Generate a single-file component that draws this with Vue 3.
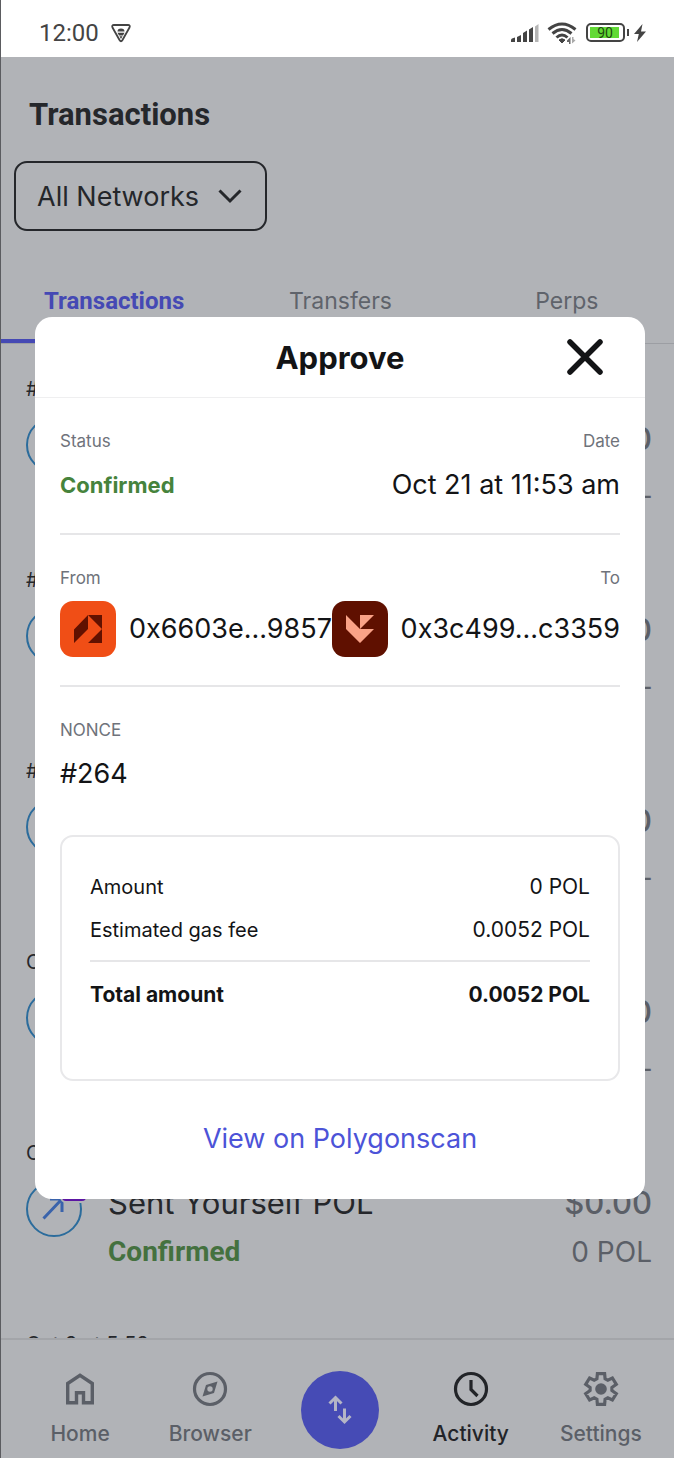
<script setup>
import { ref } from 'vue'

const network = ref('All Networks')
const open = ref(true)

const tabs = ['Transactions', 'Transfers', 'Perps']
const activeTab = ref('Transactions')

const activity = [
  { when: '#264 - Oct 21 at 11:53 am', title: 'Approve', value: '$0.00', amount: '0 POL' },
  { when: '#263 - Oct 21 at 11:52 am', title: 'Approve', value: '$0.00', amount: '0 POL' },
  { when: '#262 - Oct 21 at 11:50 am', title: 'Approve', value: '$0.00', amount: '0 POL' },
  { when: 'Oct 20 at 9:14 am', title: 'Received POL', value: '$0.00', amount: '0 POL' },
  { when: 'Oct 12 at 6:02 pm', title: 'Sent Yourself POL', value: '$0.00', amount: '0 POL' },
  { when: 'Oct 9 at 5:59 pm', title: 'Received POL', value: '$0.00', amount: '0 POL' }
]
</script>

<template>
  <div class="phone">
    <header class="status-bar">
      <span class="clock">12:00</span>
      <svg class="shield" width="20" height="20" viewBox="0 0 20 20" aria-hidden="true">
        <path d="M3 2H17Q19.500 2 18.500 4.500L11.500 17Q10 19.500 8.500 17L1.500 4.500Q.5 2 3 2Z" fill="none" stroke="#444" stroke-width="1.800" />
        <path d="M6.500 8.500Q6.500 5.500 10 5.500T13.500 8.500ZM6.500 9.800H13.500L12 12.500H8ZM8.500 13.300H11.500L10 16Z" fill="#444" />
      </svg>
      <svg class="signal" width="28" height="20" viewBox="0 0 28 20" aria-hidden="true">
        <path d="M0 19V17Q0 16 1 15.500L4 14.500V19ZM6 19V14L10 12V19ZM12 19V10L16 7.500V19ZM18 19V6.500L22 4V19Z" fill="#444" />
        <path d="M24 19V3.500L27.500 1V19Z" fill="#b5b5b5" />
      </svg>
      <svg class="wifi" width="30" height="24" viewBox="0 0 30 24" aria-hidden="true">
        <g fill="none" stroke="#444" stroke-width="3">
          <path d="M1.500 8.500Q15-2.500 28.500 8.500" />
          <path d="M5.500 12.500Q15 4.500 24.500 12.500" />
          <path d="M9.500 16.500Q15 11.500 20.500 16.500" />
        </g>
        <path d="M12 19Q15 16.500 18 19L15 22Z" fill="#444" stroke="#444" stroke-width="1" />
        <path d="M20 19.500L23.500 16V23H22V21H20Z" fill="#666" />
        <path d="M25 16H26.500V18L28.500 19.500L25 22.500Z" fill="#aaa" />
      </svg>
      <span class="battery"><span class="charge">90</span></span>
      <span class="battery-tip"></span>
      <svg class="bolt" width="12" height="18" viewBox="0 0 12 18" aria-hidden="true">
        <path d="M8.500 0L0 10H4.800L3 18L12 7.500H7Z" fill="#444" />
      </svg>
    </header>

    <main class="screen">
      <h1>Transactions</h1>
      <div class="network">
        <select v-model="network" aria-label="Network">
          <option>All Networks</option>
          <option>Polygon</option>
        </select>
        <svg width="24" height="16" viewBox="0 0 24 16" aria-hidden="true">
          <path d="M1.500 2.500L12 13L22.500 2.500" fill="none" stroke="#25272b" stroke-width="3" />
        </svg>
      </div>

      <nav class="tabs" aria-label="Activity type">
        <button
          v-for="tab in tabs"
          :key="tab"
          type="button"
          :class="{ active: tab === activeTab }"
          @click="activeTab = tab"
        >{{ tab }}</button>
      </nav>

      <ul class="list">
        <li v-for="item in activity" :key="item.when">
          <p class="when">{{ item.when }}</p>
          <div class="entry">
            <span class="token">
              <svg width="56" height="56" viewBox="0 0 56 56" aria-hidden="true">
                <circle cx="28" cy="28" r="27" fill="none" stroke="#2b6c9c" stroke-width="2" />
                <path d="M17.500 37.500L36 18M24 18H36V31" fill="none" stroke="#3a63ab" stroke-width="3" />
              </svg>
              <span class="badge"></span>
            </span>
            <div class="what">
              <p class="title">{{ item.title }}</p>
              <p class="state">Confirmed</p>
            </div>
            <div class="sum">
              <p class="title">{{ item.value }}</p>
              <p class="amount">{{ item.amount }}</p>
            </div>
          </div>
        </li>
      </ul>
    </main>

    <nav class="bottom" aria-label="Main">
      <a href="#home">
        <svg width="36" height="36" viewBox="0 0 36 36" aria-hidden="true">
          <path d="M5.700 31.700V12.500L18 4.300L30.300 12.500V31.700H21.500V21.700H14.500V31.700Z" fill="none" stroke="currentColor" stroke-width="3.400" />
        </svg>
        Home
      </a>
      <a href="#browser">
        <svg width="36" height="36" viewBox="0 0 36 36" aria-hidden="true">
          <circle cx="18" cy="18" r="15.500" fill="none" stroke="currentColor" stroke-width="3.200" />
          <path fill="currentColor" fill-rule="evenodd" d="M25.500 10.500L14 14L10.500 25.500L22 22ZM18 15.300A2.700 2.700 0 1 1 18 20.700A2.700 2.700 0 1 1 18 15.300Z" />
        </svg>
        Browser
      </a>
      <button type="button" class="swap" aria-label="Swap">
        <svg width="30" height="30" viewBox="0 0 30 30" aria-hidden="true">
          <path d="M10.500 16V2.500M4.500 8.500L10.500 2.500L16.500 8.500M19.500 13.500V27M13.500 21L19.500 27L25.500 21" fill="none" stroke="#b4b5c6" stroke-width="3" />
        </svg>
      </button>
      <a href="#activity" class="current" aria-current="page">
        <svg width="36" height="36" viewBox="0 0 36 36" aria-hidden="true">
          <circle cx="18" cy="18" r="15.500" fill="none" stroke="currentColor" stroke-width="3.200" />
          <path d="M18 9V18.500L24.500 25" fill="none" stroke="currentColor" stroke-width="3.200" />
        </svg>
        Activity
      </a>
      <a href="#settings">
        <svg width="36" height="36" viewBox="-18 -18 36 36" aria-hidden="true">
          <path d="M-4.100-10.200L-3.600-15.400H3.600L4.100-10.200L6.800-8.700L11.400-11L15.300-4.600L10.900-1.500V1.500L15.300 4.600L11.400 11L6.800 8.700L4.100 10.200L3.600 15.400H-3.600L-4.100 10.200L-6.800 8.700L-11.400 11L-15.300 4.600L-10.900 1.500V-1.500L-15.300-4.600L-11.400-11L-6.800-8.700Z" fill="none" stroke="currentColor" stroke-width="3.200" />
          <circle r="5.800" fill="currentColor" />
        </svg>
        Settings
      </a>
    </nav>

    <section v-if="open" class="dialog" role="dialog" aria-labelledby="dialog-title">
      <header class="dialog-head">
        <h2 id="dialog-title">Approve</h2>
        <button type="button" class="close" aria-label="Close" @click="open = false">
          <svg width="36" height="36" viewBox="0 0 36 36" aria-hidden="true">
            <path d="M3 3L33 33M33 3L3 33" fill="none" stroke="#131416" stroke-width="5.500" stroke-linecap="round" />
          </svg>
        </button>
      </header>

      <div class="dialog-body">
        <div class="pair">
          <div class="field">
            <h3>Status</h3>
            <p class="confirmed">Confirmed</p>
          </div>
          <div class="field end">
            <h3>Date</h3>
            <p>Oct 21 at 11:53 am</p>
          </div>
        </div>

        <div class="pair accounts">
          <div class="field from">
            <h3>From</h3>
            <p class="account">
              <svg width="56" height="56" viewBox="0 0 56 56" aria-hidden="true">
                <rect width="56" height="56" rx="13" fill="#f04e16" />
                <path d="M14 42V28.500L28 14V28ZM28 14H42V28ZM42 28V42H28Z" fill="#611100" />
              </svg>
              0x6603e...98577
            </p>
          </div>
          <div class="field end to">
            <h3>To</h3>
            <p class="account">
              <svg width="56" height="56" viewBox="0 0 56 56" aria-hidden="true">
                <rect width="56" height="56" rx="13" fill="#5f1000" />
                <path d="M14 14L28 28H42L28 42L14 28ZM28 14H42L28 28Z" fill="#faa287" />
              </svg>
              0x3c499...c3359
            </p>
          </div>
        </div>

        <div class="field nonce">
          <h3>NONCE</h3>
          <p>#264</p>
        </div>

        <dl class="fees">
          <div><dt>Amount</dt><dd>0 POL</dd></div>
          <div><dt>Estimated gas fee</dt><dd>0.0052 POL</dd></div>
          <div class="total"><dt>Total amount</dt><dd>0.0052 POL</dd></div>
        </dl>

        <a class="explorer" href="#polygonscan">View on Polygonscan</a>
      </div>
    </section>
  </div>
</template>

<style>
body {
  margin: 0;
}
</style>

<style scoped>
.phone {
  position: relative;
  display: flex;
  flex-direction: column;
  box-sizing: border-box;
  height: 100vh;
  overflow: hidden;
  border-left: 1px solid #5b5c60;
  background: #b1b3b7;
  color: #25272b;
  font-family: Inter, "Liberation Sans", sans-serif;
}

h1, h2, h3, p, ul, dl, dd {
  margin: 0;
  padding: 0;
  font-weight: 400;
}

button {
  padding: 0;
  border: 0;
  background: none;
  font: inherit;
  color: inherit;
}

svg {
  display: block;
  flex: none;
}

.status-bar {
  display: flex;
  flex: none;
  align-items: center;
  box-sizing: border-box;
  height: 57px;
  padding: 8px 28px 0 38px;
  background: #fff;
}

.clock {
  font: 24px/32px Roboto, sans-serif;
  color: #444;
}

.shield {
  margin-left: 12px;
}

.signal {
  margin-left: auto;
}

.wifi {
  margin-left: 8px;
}

.battery {
  box-sizing: border-box;
  width: 39px;
  height: 19px;
  margin-left: 9px;
  padding: 2px;
  border: 2px solid #444;
  border-radius: 5px;
}

.charge {
  display: block;
  width: 28px;
  height: 11px;
  padding-left: 1px;
  background: #62da35;
  color: #1f4a12;
  font: 14px/12px Roboto, sans-serif;
  text-align: center;
}

.battery-tip {
  width: 2px;
  height: 7px;
  margin: 0 5px 0 2px;
  background: #444;
}

.screen {
  display: flex;
  flex: 1;
  flex-direction: column;
  min-height: 0;
  overflow: hidden;
}

h1 {
  padding: 38px 28px 0;
  font: 700 31px/40px Roboto, sans-serif;
}

.network {
  display: flex;
  align-items: center;
  align-self: flex-start;
  margin: 26px 0 0 13px;
}

.network select {
  box-sizing: border-box;
  width: 253px;
  height: 70px;
  padding: 2px 60px 0 21px;
  border: 2px solid #25272b;
  border-radius: 13px;
  appearance: none;
  background: none;
  color: inherit;
  font: 27px/36px Inter, sans-serif;
}

.network svg {
  margin-left: -49px;
  pointer-events: none;
}

.tabs {
  display: grid;
  flex: none;
  grid-template-columns: repeat(3, 1fr);
  margin: 54px -6px 0 0;
  border-bottom: 1px solid #9c9ea3;
}

.tabs button {
  padding-bottom: 22px;
  border-bottom: 4px solid transparent;
  color: #5f636b;
  font-size: 23px;
  line-height: 32px;
}

.tabs .active {
  border-color: #4549b4;
  color: #4549b4;
  font-family: Roboto, sans-serif;
  font-size: 24px;
  font-weight: 700;
}

.list {
  flex: 1;
  min-height: 0;
  padding: 32px 22px 0 25px;
  overflow: hidden;
  list-style: none;
}

.list li {
  padding-bottom: 60px;
}

.when {
  font-size: 20px;
  line-height: 26px;
}

.entry {
  display: flex;
  margin-top: 15px;
}

.token {
  position: relative;
  flex: none;
  width: 56px;
  height: 56px;
  margin-right: 26px;
}

.badge {
  position: absolute;
  top: -6px;
  right: -6px;
  width: 24px;
  height: 24px;
  border: 2px solid #b1b3b7;
  border-radius: 6px;
  background: #5c16a3;
}

.what {
  flex: 1;
}

.title {
  font-size: 31px;
  line-height: 44px;
}

.sum .title {
  font-weight: 500;
}

.state,
.amount {
  margin-top: 8px;
  font-size: 28px;
  line-height: 38px;
}

.state {
  color: #44713f;
  font-family: Roboto, sans-serif;
  font-weight: 700;
}

.sum {
  color: #5b5f67;
  text-align: right;
}

.bottom {
  display: grid;
  flex: none;
  grid-template-columns: repeat(5, 1fr);
  box-sizing: border-box;
  min-height: 120px;
  padding: 31px 8px 0 14px;
  border-top: 2px solid #a3a5a9;
}

.bottom a {
  display: flex;
  flex-direction: column;
  align-items: center;
  gap: 13px;
  color: #5b5f67;
  font-size: 21px;
  font-weight: 500;
  line-height: 28px;
  text-decoration: none;
}

.bottom .current {
  color: #222428;
}

.swap {
  display: grid;
  place-items: center;
  justify-self: center;
  width: 78px;
  height: 78px;
  border-radius: 50%;
  background: #464bb5;
}

.dialog {
  position: absolute;
  top: 317px;
  right: 29px;
  left: 34px;
  border-radius: 17px;
  background: #fff;
  color: #131416;
}

.dialog-head {
  display: grid;
  grid-template-columns: 1fr auto 1fr;
  align-items: center;
  height: 80px;
  padding: 0 42px;
  border-bottom: 1px solid #efeff0;
}

h2 {
  grid-column: 2;
  padding-top: 2px;
  font-size: 31px;
  font-weight: 700;
  line-height: 40px;
}

.close {
  justify-self: end;
}

.dialog-body {
  padding: 0 25px 42px;
}

.pair {
  display: flex;
  justify-content: space-between;
  padding: 31px 0 30px;
  border-bottom: 2px solid #e6e6e8;
}

h3 {
  color: #6f737b;
  font-size: 17px;
  line-height: 24px;
}

.field p {
  margin-top: 14px;
  font-size: 27px;
  line-height: 36px;
  white-space: nowrap;
}

.end {
  text-align: right;
}

.field .confirmed {
  color: #46833c;
  font-size: 22px;
  font-weight: 700;
}

.accounts {
  padding-bottom: 28px;
}

.from {
  flex: 1;
  min-width: 0;
}

.field .account {
  display: flex;
  align-items: center;
  gap: 13px;
  margin-top: 11px;
}

.nonce {
  padding-top: 31px;
}

.fees {
  margin-top: 43px;
  padding: 36px 28px 70px;
  border: 2px solid #e8e8ea;
  border-radius: 13px;
  font-size: 20px;
  line-height: 28px;
}

.fees div {
  display: flex;
  justify-content: space-between;
}

.fees div + div {
  margin-top: 15px;
}

.fees dd {
  font-size: 21px;
}

.fees .total {
  margin-top: 16px;
  padding-top: 19px;
  border-top: 2px solid #e6e6e8;
  font-size: 21px;
}

.total dt,
.total dd {
  font-weight: 700;
}

.explorer {
  display: block;
  margin-top: 40px;
  color: #4c53d8;
  font-size: 27px;
  line-height: 36px;
  text-align: center;
  text-decoration: none;
}
</style>
